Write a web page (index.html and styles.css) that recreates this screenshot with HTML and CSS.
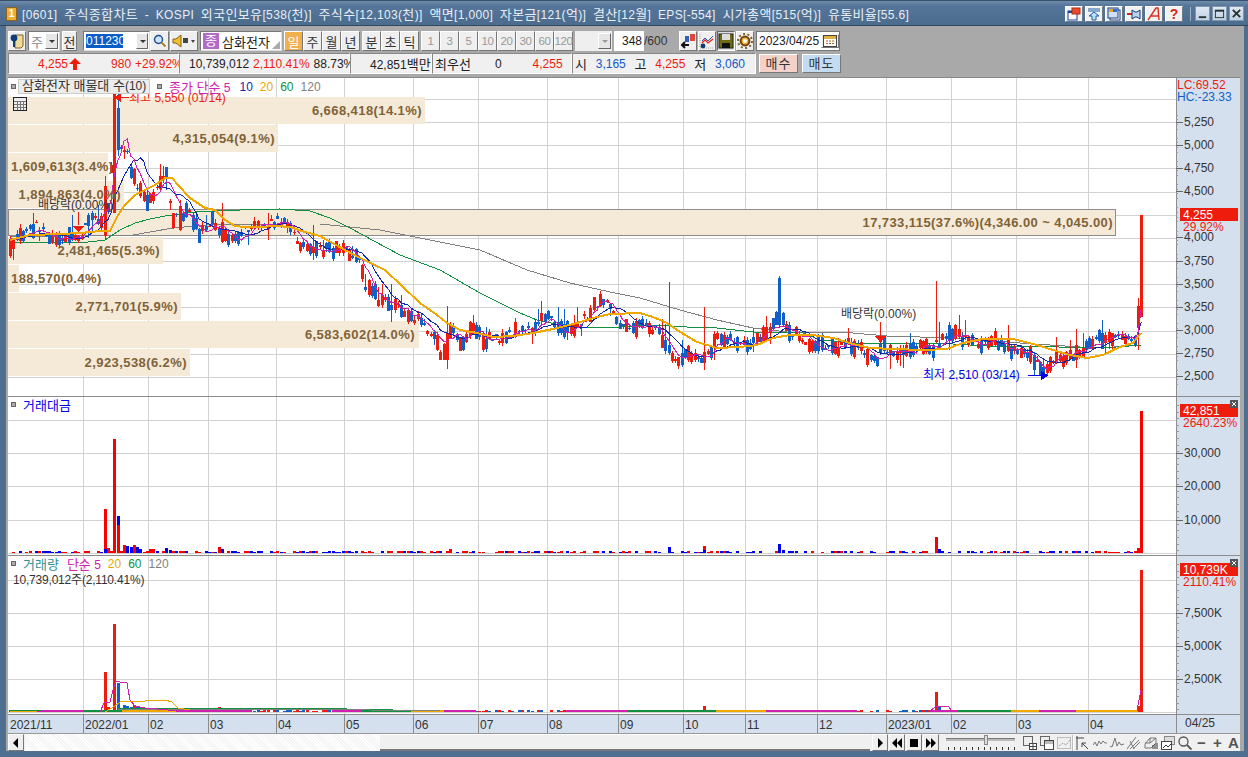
FILE: index.html
```html
<!DOCTYPE html>
<html lang="ko">
<head>
    <meta charset="UTF-8">
    <title>주식종합차트</title>
    <link rel="stylesheet" href="styles.css">
</head>
<body>
<div class="window">
    <div class="titlebar">
        <span class="app-icon">1</span>
        <span class="title-text">[0601] <b>주식종합차트</b> - KOSPI <b>외국인보유</b>[538(<b>천</b>)] <b>주식수</b>[12,103(<b>천</b>)] <b>액면</b>[1,000] <b>자본금</b>[121(<b>억</b>)] <b>결산</b>[12<b>월</b>] EPS[-554] <b>시가총액</b>[515(<b>억</b>)] <b>유통비율</b>[55.6]</span>
        <div class="title-tools">
            <span class="tool-btn"><svg width="14" height="14" viewBox="0 0 14 14"><rect x="1" y="4" width="9" height="9" fill="#fff" stroke="#1a3f9c"/><rect x="1" y="4" width="9" height="2" fill="#1a3f9c"/><rect x="5" y="1" width="8" height="6" fill="#e84c2c" stroke="#b02c10"/></svg></span>
            <span class="tool-btn"><svg width="14" height="14" viewBox="0 0 14 14"><path d="M1 2h12M1 4h12" stroke="#1a5fa8"/><path d="M7 5l5 4H9v4H5V9H2z" fill="#bfe0f4" stroke="#1a5fa8"/></svg></span>
            <span class="tool-btn"><svg width="14" height="14" viewBox="0 0 14 14"><rect x="3" y="3" width="10" height="10" fill="#fff" stroke="#1a3f7c"/><rect x="1" y="1" width="10" height="10" fill="#cfe0f4" stroke="#1a3f7c"/><rect x="2" y="2" width="4" height="3" fill="#e8a030"/><rect x="6" y="2" width="4" height="3" fill="#3070d0"/></svg></span>
            <span class="tool-btn"><svg width="14" height="14" viewBox="0 0 14 14"><path d="M0 7h5" stroke="#d02818" stroke-width="2"/><path d="M5 3l3 2h2l3-2v9l-3-2H8l-3 2z" fill="#bcd4ec" stroke="#123a7c"/></svg></span>
            <span class="tool-btn"><svg width="14" height="14" viewBox="0 0 14 14"><path d="M1 13L9 1h2l1 12M4 9h8" fill="none" stroke="#d83020" stroke-width="1.4"/></svg></span>
            <span class="tool-btn help">?</span>
        </div>
        <span class="title-sep"></span>
        <div class="win-btns">
            <span class="win-btn"><svg width="11" height="11" viewBox="0 0 12 12"><rect x="2" y="9" width="8" height="2" fill="#233"/></svg></span>
            <span class="win-btn"><svg width="11" height="11" viewBox="0 0 12 12"><rect x="1.5" y="2.5" width="9" height="8" fill="none" stroke="#233"/><rect x="1" y="2" width="10" height="2" fill="#233"/></svg></span>
            <span class="win-btn"><svg width="11" height="11" viewBox="0 0 12 12"><path d="M2 2l8 8M10 2l-8 8" stroke="#233" stroke-width="2"/></svg></span>
        </div>
    </div>

    <div class="frame">
        <div class="toolbars">
            <div class="toolbar">
                <span class="btn btn-icon w18"><svg width="16" height="16" viewBox="0 0 16 16"><path d="M6 2h8v11l-2 2H6z" fill="#f0dc98" stroke="#806020"/><circle cx="5" cy="5" r="3.4" fill="#103c78"/><path d="M5 7v7" stroke="#103c78" stroke-width="2"/></svg></span>
                <span class="combo w32"><span class="combo-val grey">주</span><span class="arrow"></span></span>
                <span class="btn w15">전</span>
                <span class="combo code"><span class="code-sel">011230</span><span class="arrow"></span></span>
                <span class="btn btn-icon w19 search"><svg width="14" height="14" viewBox="0 0 14 14"><circle cx="5.5" cy="5.5" r="4" fill="#cfe4f8" stroke="#1c4c8c" stroke-width="1.4"/><path d="M8.5 8.5l4 4" stroke="#b08020" stroke-width="2"/></svg></span>
                <span class="btn btn-icon speaker"><svg width="24" height="14" viewBox="0 0 24 14"><path d="M1 5h3l5-4v12l-5-4H1z" fill="#f0c030" stroke="#806010"/><rect x="11" y="4" width="5" height="5" fill="#444"/><path d="M19 6h4l-2 3z" fill="#444"/></svg></span>
                <span class="combo name"><span class="name-badge">종</span><span class="name-text">삼화전자</span><span class="corner"></span></span>
                <span class="seg">
                    <span class="btn on">일</span><span class="btn">주</span><span class="btn">월</span><span class="btn">년</span>
                </span>
                <span class="seg">
                    <span class="btn">분</span><span class="btn">초</span><span class="btn">틱</span>
                </span>
                <span class="seg nums">
                    <span class="btn">1</span><span class="btn">3</span><span class="btn">5</span><span class="btn">10</span><span class="btn">20</span><span class="btn">30</span><span class="btn">60</span><span class="btn">120</span>
                </span>
                <span class="combo blank"><span class="combo-val"></span><span class="arrow faded"></span></span>
                <span class="count">348</span><span class="count-max">/600</span>
                <span class="btn btn-icon w18 ml7"><svg width="16" height="16" viewBox="0 0 16 16"><rect x="10" y="1" width="5" height="7" fill="#e04838"/><rect x="5" y="3" width="4" height="6" fill="#3060b8"/><path d="M9 12H2m3-3l-3 3 3 3" fill="none" stroke="#111" stroke-width="2"/></svg></span>
                <span class="btn btn-icon w18 tight"><svg width="16" height="16" viewBox="0 0 16 16"><path d="M1 1v14h14" fill="none" stroke="#aaa" stroke-dasharray="1 1"/><path d="M3 8l3-3 3 3 5-5" fill="none" stroke="#2858a8"/><path d="M3 10l3-3 3 3 5-4" fill="none" stroke="#e02818" stroke-width="1.3"/><circle cx="4" cy="13" r="2.4" fill="#103c68"/></svg></span>
                <span class="btn btn-icon w18 tight pressed"><svg width="16" height="16" viewBox="0 0 16 16"><rect x="1" y="1" width="14" height="14" fill="#6c6c14" stroke="#222"/><rect x="4" y="1" width="8" height="6" fill="#ddd"/><rect x="4" y="10" width="8" height="5" fill="#111"/></svg></span>
                <span class="btn btn-icon w18 tight"><svg width="16" height="16" viewBox="0 0 16 16"><circle cx="8" cy="8" r="4.4" fill="#f0b030" stroke="#704010" stroke-width="2"/><circle cx="8" cy="8" r="7" fill="none" stroke="#806030" stroke-width="2" stroke-dasharray="2 2.4"/><circle cx="8" cy="8" r="2" fill="#fff"/></svg></span>
                <span class="date"><span class="date-val">2023/04/25</span><span class="btn btn-icon w18"><svg width="14" height="12" viewBox="0 0 14 12"><rect x=".5" y=".5" width="13" height="11" fill="#fff" stroke="#444"/><rect x="1" y="1" width="12" height="3" fill="#e0b040"/><path d="M3 6h8M3 8.5h8" stroke="#b06020" stroke-dasharray="2 1"/></svg></span></span>
            </div>

            <div class="toolbar quote">
                <div class="qbox q1">
                    <span class="red price">4,255</span>
                    <svg class="up" width="12" height="12" viewBox="0 0 12 12"><path d="M6 0l6 6H8v6H4V6H0z" fill="#ee1c0c"/></svg>
                    <span class="red change">980</span>
                    <span class="red rate">+29.92%</span>
                </div>
                <div class="qbox q2">
                    <span class="vol">10,739,012</span>
                    <span class="red volrate">2,110.41%</span>
                    <span>88.73%</span>
                </div>
                <div class="qbox q3"><span>42,851<b>백만</b></span></div>
                <div class="qbox q4">
                    <span class="best">최우선</span>
                    <span class="zero">0</span>
                    <span class="red bid">4,255</span>
                </div>
                <div class="qbox q5">
                    <b>시</b><span class="blue">3,165</span><b>고</b><span class="red">4,255</span><b>저</b><span class="blue">3,060</span>
                </div>
                <span class="trade buy">매수</span>
                <span class="trade sell">매도</span>
            </div>
        </div>

        <div class="chart">
            <div class="pane pane-price">
                <div class="plot">
                    <svg id="priceSvg" class="plot-svg" viewBox="8 78 1168 318" width="1168" height="318"></svg>
                    <div class="legend">
                        <i class="dot"></i><span class="legend-box"><b>삼화전자 매물대 수</b>(10)</span>
                        <i class="dot"></i><span class="c-mag"><b>종가 단순</b> 5</span><span class="c-navy ml2">10</span><span class="c-org">20</span><span class="c-grn">60</span><span class="c-gry">120</span>
                    </div>
                    <span class="table-icon"><svg width="14" height="14" viewBox="0 0 14 14"><rect x=".5" y=".5" width="13" height="13" fill="#eee" stroke="#222"/><path d="M1 4.5h12M1 7.5h12M1 10.5h12M4.5 4v9M7.5 4v9M10.5 4v9" stroke="#777"/></svg></span>
                </div>
                <div class="axis"><svg id="priceAxis" viewBox="1176 78 64 318" width="64" height="318"></svg></div>
            </div>
            <div class="pane pane-vol">
                <div class="plot">
                    <svg id="amountSvg" class="plot-svg" viewBox="8 397 1168 158" width="1168" height="158"></svg>
                    <div class="legend"><i class="dot"></i><span class="c-blue"><b>거래대금</b></span></div>
                </div>
                <div class="axis"><svg id="amountAxis" viewBox="1176 397 64 158" width="64" height="158"></svg><svg class="pane-x" width="8" height="8" viewBox="0 0 8 8"><rect width="8" height="8" fill="#555"/><path d="M2 2l4 4M6 2L2 6" stroke="#fff"/></svg></div>
            </div>
            <div class="pane pane-vol last">
                <div class="plot">
                    <svg id="volumeSvg" class="plot-svg" viewBox="8 556 1168 158" width="1168" height="158"></svg>
                    <div class="legend"><i class="dot"></i><span class="c-teal"><b>거래량</b></span><span class="c-mag"><b>단순</b> 5</span><span class="c-org">20</span><span class="c-grn">60</span><span class="c-gry">120</span></div>
                    <div class="legend-sub">10,739,012주(2,110.41%)</div>
                </div>
                <div class="axis"><svg id="volumeAxis" viewBox="1176 556 64 158" width="64" height="158"></svg><svg class="pane-x" width="8" height="8" viewBox="0 0 8 8"><rect width="8" height="8" fill="#555"/><path d="M2 2l4 4M6 2L2 6" stroke="#fff"/></svg></div>
            </div>
            <div class="timeaxis">
                <div class="timeaxis-plot"><svg id="timeSvg" viewBox="8 714 1168 18" width="1168" height="18"></svg></div>
                <div class="timeaxis-end">04/25</div>
            </div>
        </div>

        <div class="bottombar">
            <span class="btn nav-btn"><svg width="8" height="10" viewBox="0 0 8 10"><path d="M6 0v10L1 5z" fill="#000"/></svg></span>
            <span class="track"></span>
            <span class="thumb"></span>
            <span class="btn nav-btn"><svg width="8" height="10" viewBox="0 0 8 10"><path d="M2 0v10l5-5z" fill="#000"/></svg></span>
            <span class="btn nav-btn"><svg width="12" height="10" viewBox="0 0 12 10"><path d="M6 0v10L1 5zM11 0v10L6 5z" fill="#000"/></svg></span>
            <span class="btn nav-btn"><svg width="10" height="10" viewBox="0 0 10 10"><rect x="1" y="1" width="8" height="8" fill="#000"/></svg></span>
            <span class="btn nav-btn"><svg width="12" height="10" viewBox="0 0 12 10"><path d="M1 0v10l5-5zM6 0v10l5-5z" fill="#000"/></svg></span>
            <span class="slider"><span class="slider-line"></span><span class="slider-knob"></span><span class="slider-ticks"></span></span>
            <div class="tools">
                <svg width="14" height="14" viewBox="0 0 14 14"><rect x=".5" y=".5" width="9" height="9" fill="#eee" stroke="#666"/><rect x="6.5" y="7.5" width="7" height="6" fill="#fff" stroke="#444"/><path d="M10 7v7M6 10.500h8" stroke="#444"/></svg>
                <svg width="14" height="14" viewBox="0 0 14 14"><rect x=".5" y=".5" width="9" height="9" fill="#eee" stroke="#666"/><rect x="4.500" y="4.500" width="9" height="9" fill="#fff" stroke="#444"/><rect x="5" y="5" width="8" height="3" fill="#bbb"/></svg>
                <svg width="14" height="14" viewBox="0 0 14 14"><rect x=".5" y="1.500" width="13" height="11" fill="none" stroke="#888" stroke-dasharray="1 1"/><path d="M2 10l4-3 3 2 4-5" fill="none" stroke="#888" stroke-dasharray="1 1"/></svg>
                <span class="tools-gap"></span>
                <svg width="14" height="14" viewBox="0 0 14 14"><path d="M1 0v14M0 2h8M6 7l6 6M6 7h4M6 7v4" fill="none" stroke="#444"/></svg>
                <svg width="14" height="14" viewBox="0 0 14 14"><path d="M0 9l2-3 2 4 2-5 2 3 2-3 2 2h2" fill="none" stroke="#777"/></svg>
                <svg width="14" height="14" viewBox="0 0 14 14"><path d="M0 10l2 1 3-9 2 8 2-4 2 3 3-1" fill="none" stroke="#777"/></svg>
                <svg width="14" height="14" viewBox="0 0 14 14"><path d="M0 13L9 1M3 13L12 4M6 13l7-7M3 5l4 8" fill="none" stroke="#777"/></svg>
                <svg width="14" height="14" viewBox="0 0 14 14"><path d="M1 8l5-6h6v5l-5 5H1zM6 2v5H1M6 7l6-5" fill="#eee" stroke="#777"/><path d="M9 13V9M11 13V8M13 13V7" stroke="#333"/></svg>
                <svg width="14" height="14" viewBox="0 0 14 14"><rect x="3.500" y=".5" width="10" height="8" fill="#ddd" stroke="#888"/><rect x=".5" y="5.500" width="10" height="8" fill="#fff" stroke="#444"/><path d="M2 12l3-3 2 2 3-3" fill="none" stroke="#333"/></svg>
                <svg width="14" height="14" viewBox="0 0 14 14"><circle cx="5.500" cy="5.500" r="4.500" fill="none" stroke="#555" stroke-width="1.300"/><path d="M9 9l4.500 4.500" stroke="#555" stroke-width="1.800"/></svg>
                <span class="tool-char">−</span>
                <span class="tool-char">+</span>
                <span class="tool-char">A</span>
            </div>
        </div>
    </div>
</div>
<script src="chart.js"></script>
</body>
</html>
```

FILE: styles.css
```css
:root {
    --frame: #4f6f90;
    --panel: #a9a9a9;
    --axis: #d5e0ee;
    --grid: #d2d2d2;
    --line: #8c8c8c;
    --red: #ee1c0c;
    --blue: #1458c8;
}

* {
    margin: 0;
    padding: 0;
    box-sizing: border-box;
}

body {
    width: 1248px;
    height: 757px;
    overflow: hidden;
    background-color: var(--frame);
    font-family: "Liberation Sans", "Noto Sans CJK KR", sans-serif;
    font-size: 12px;
    color: #222;
}

/* hangul runs: the CJK face sets narrower than the reference at 12px */
b {
    font-weight: normal;
    font-size: 13px;
}

svg {
    display: block;
    flex: none;
}

.window {
    height: 757px;
    display: flex;
    flex-direction: column;
}

/* title bar */
.titlebar {
    height: 26px;
    flex: none;
    display: flex;
    align-items: center;
    padding: 2px 4px 1px 6px;
    background: linear-gradient(#6f8dab, #55759a 20%, #4c6c8e);
    border-top: 1px solid #34506c;
    border-bottom: 1px solid #33485e;
}

.app-icon {
    width: 11px;
    height: 14px;
    background: #eeae38;
    border: 1px solid #8c6420;
    color: #fff;
    font-weight: bold;
    font-size: 10px;
    line-height: 12px;
    text-align: center;
}

.title-text {
    margin-left: 5px;
    color: #e8eef5;
    letter-spacing: .35px;
    word-spacing: 3px;
    white-space: nowrap;
    flex: 1;
}

.title-tools {
    display: flex;
    gap: 2px;
}

.tool-btn {
    width: 18px;
    height: 16px;
    display: flex;
    align-items: center;
    justify-content: center;
    background: #f1f1f1;
    border: 1px solid;
    border-color: #fff #6a7a8a #6a7a8a #fff;
}

.help {
    color: #d82818;
    font-weight: bold;
    font-size: 14px;
}

.title-sep {
    width: 1px;
    height: 14px;
    margin: 0 4px 0 7px;
    background: #9fb2c5;
}

.win-btns {
    display: flex;
    gap: 2px;
}

.win-btn {
    width: 15px;
    height: 15px;
    display: flex;
    align-items: center;
    justify-content: center;
    background: linear-gradient(#dfe8f2, #c0d0e2);
    border: 1px solid #7f96ad;
}

/* toolbars */
.frame {
    flex: 1;
    margin: 0 4px 6px 6px;
    padding: 0 4px 0 2px;
    background-color: var(--panel);
    display: flex;
    flex-direction: column;
    min-height: 0;
}

.toolbars {
    height: 51px;
    flex: none;
    padding-top: 5px;
}

.toolbar {
    height: 20px;
    display: flex;
    align-items: stretch;
    gap: 2px;
}

.btn {
    display: flex;
    align-items: center;
    justify-content: center;
    background-color: #efefef;
    border: 1px solid;
    border-color: #fdfdfd #777 #777 #fdfdfd;
    color: #333;
    font-size: 13px;
    flex: none;
}

.w15 { width: 15px; }
.w18 { width: 18px; }
.w19 { width: 19px; }
.ml7 { margin-left: 7px; }
.ml2 { margin-left: 2px; }
.tight { margin-left: -1px; }

.pressed {
    background-color: #ddd;
    border-color: #666 #fff #fff #666;
}

.combo {
    display: flex;
    align-items: center;
    background-color: #fff;
    border: 1px solid;
    border-color: #777 #ddd #ddd #777;
    flex: none;
}

.w32 { width: 32px; }

.combo-val {
    flex: 1;
    text-align: center;
    font-size: 13px;
}

.grey { color: #888; }

.arrow {
    position: relative;
    width: 13px;
    height: 16px;
    margin-right: 1px;
    background: #e6e6e6;
    border: 1px solid;
    border-color: #fff #666 #666 #fff;
}

.arrow::after {
    content: "";
    position: absolute;
    left: 3px;
    top: 6px;
    border: 3px solid transparent;
    border-top: 3px solid #333;
}

.arrow.faded::after { border-top-color: #999; }

.code {
    width: 67px;
    margin-left: 4px;
    padding-left: 2px;
}

.code-sel {
    width: 37px;
    background-color: #0a5cc8;
    color: #fff;
    line-height: 14px;
    margin-right: 13px;
}

.search {
    margin-left: -2px;
}

.speaker {
    width: 28px;
    margin-left: -1px;
}

.name {
    width: 82px;
    padding-left: 2px;
    position: relative;
}

.name-badge {
    width: 16px;
    height: 16px;
    background-color: #b26cc8;
    color: #fff;
    text-align: center;
    font-size: 13px;
    line-height: 15px;
}

.name-text {
    margin-left: 3px;
    font-size: 13px;
    color: #222;
}

.corner {
    position: absolute;
    right: 1px;
    bottom: 1px;
    border: 4px solid transparent;
    border-right-color: #aaa;
    border-bottom-color: #aaa;
}

.seg {
    display: flex;
    gap: 0;
}

.seg .btn {
    width: 19px;
}

.seg .on {
    background-color: #f2b04c;
    color: #fff;
}

.nums .btn {
    color: #999;
    font-size: 11.5px;
    letter-spacing: -.4px;
}

.blank {
    width: 37px;
    background-color: #efefef;
    border: none;
}

.count {
    width: 30px;
    background-color: #fff;
    text-align: right;
    line-height: 20px;
    padding-right: 2px;
    color: #222;
}

.count-max {
    width: 26px;
    line-height: 20px;
    margin-left: -2px;
    color: #333;
}

.date {
    display: flex;
    align-items: center;
    width: 84px;
    background-color: #fff;
    border: 1px solid #777;
}

.date-val {
    flex: 1;
    padding-left: 2px;
    white-space: nowrap;
}

.quote {
    margin-top: 2px;
    gap: 0;
    height: 21px;
}

.qbox {
    display: flex;
    align-items: center;
    flex: none;
    background-color: #f0f0f0;
    border: 1px solid;
    border-color: #888 #fff #fff #888;
    height: 21px;
    white-space: nowrap;
}

.red { color: var(--red); }
.blue { color: var(--blue); }

.q1 { width: 171px; }
.price { margin-left: 29px; }
.up { margin-left: 1px; }
.change { margin-left: 30px; }
.rate { margin-left: 4px; }

.q2 { width: 171px; padding-left: 9px; }
.volrate { margin: 0 4px; }

.q3 { width: 82px; padding-left: 19px; }

.q4 { width: 140px; font-size: 12px; }
.best { margin-left: 2px; font-size: 13px; }
.zero { margin-left: 24px; }
.bid { margin-left: 31px; }

.q5 {
    width: 184px;
    padding: 0 10px 0 2px;
    justify-content: space-between;
}

.trade {
    width: 39px;
    height: 19px;
    margin-top: 1px;
    text-align: center;
    font-size: 13px;
    line-height: 17px;
    letter-spacing: 1px;
    color: #333;
    border: 1px solid;
    border-color: #fff #777 #777 #fff;
    flex: none;
}

.buy { margin-left: 3px; background-color: #f4d2ca; }
.sell { margin-left: 4px; background-color: #c4dcf2; }

/* chart panes */
.chart {
    flex: none;
    display: flex;
    flex-direction: column;
    background-color: #fff;
    border-top: 1px solid #888;
}

.pane {
    display: flex;
    border-bottom: 1px solid var(--line);
}

.pane-price { height: 319px; }
.pane-vol { height: 159px; }

.plot {
    position: relative;
    width: 1168px;
    flex: none;
    background-color: #fff;
}

.plot-svg { shape-rendering: crispEdges; }

.plot-svg text,
.axis text {
    font-family: "Liberation Sans", "Noto Sans CJK KR", sans-serif;
    font-size: 12px;
}

.plot-svg .profile-label {
    font-size: 13px;
    font-weight: bold;
    letter-spacing: .42px;
    fill: #7f6337;
}

.axis {
    position: relative;
    width: 64px;
    flex: none;
    background-color: var(--axis);
    border-left: 1px solid var(--line);
}

.axis svg {
    margin-left: -1px;
}

.axis .pane-x {
    position: absolute;
    right: 2px;
    top: 3px;
    margin: 0;
}

.legend {
    position: absolute;
    left: 3px;
    top: 1px;
    display: flex;
    align-items: center;
    gap: 7px;
    height: 15px;
    white-space: nowrap;
}

.pane-vol .legend {
    top: 0;
}

.pane-vol .legend .c-mag { margin-left: 1px; }

.dot {
    width: 5px;
    height: 5px;
    background-color: #aaa;
    border: 1px solid #666;
    flex: none;
}

.legend-box {
    height: 15px;
    width: 132px;
    margin-left: -5px;
    padding-left: 3px;
    line-height: 12px;
    color: #333;
    background-color: #ececec;
    border: 1px solid #ccc;
}

.c-mag { color: #d020b0; }
.c-navy { color: #1028a8; }
.c-org { color: #e8a800; }
.c-grn { color: #109040; }
.c-gry { color: #808080; }
.c-blue { color: #0000e8; }
.c-teal { color: #309090; }

.legend-sub {
    position: absolute;
    left: 5px;
    top: 14px;
    color: #333;
    letter-spacing: -.2px;
}

.table-icon {
    position: absolute;
    left: 5px;
    top: 19px;
}

.timeaxis {
    display: flex;
    height: 19px;
    background-color: var(--axis);
    border-bottom: 1px solid #999;
}

.timeaxis-plot {
    width: 1168px;
    flex: none;
}

.timeaxis-plot svg {
    shape-rendering: crispEdges;
}

.timeaxis-plot text {
    font-family: "Liberation Sans", sans-serif;
    font-size: 12px;
}

.timeaxis-end {
    flex: 1;
    border-left: 1px solid var(--line);
    padding-left: 8px;
    line-height: 17px;
    color: #333;
}

/* bottom bar */
.bottombar {
    height: 18px;
    display: flex;
    align-items: stretch;
    background-color: #f0f0f0;
}

.nav-btn {
    width: 16px;
    margin-right: 1px;
    flex: none;
}

.track {
    width: 355px;
    flex: none;
    background-image: repeating-linear-gradient(45deg, #fff 0 1px, #f4f4f4 1px 2px);
}

.thumb {
    width: 490px;
    flex: none;
    margin-right: 2px;
    background-color: #f0f0f0;
    border-top: 1px solid #fff;
    border-bottom: 2px solid #777;
}

.slider {
    position: relative;
    width: 69px;
    flex: none;
    margin: 0 8px 0 6px;
}

.slider-line {
    position: absolute;
    left: 0;
    right: 0;
    top: 4px;
    height: 3px;
    background-color: #bbb;
    border-top: 1px solid #777;
}

.slider-knob {
    position: absolute;
    left: 38px;
    top: 1px;
    width: 4px;
    height: 10px;
    background-color: #ddd;
    border: 1px solid #888;
}

.slider-ticks {
    position: absolute;
    left: 2px;
    right: 0;
    bottom: 1px;
    height: 3px;
    background-image: repeating-linear-gradient(90deg, #333 0 1px, transparent 1px 6px);
}

.tools {
    display: flex;
    align-items: center;
    gap: 3px;
    flex: 1;
    min-width: 0;
}

.tools-gap {
    width: 1px;
    height: 16px;
    margin: 0 -1px;
    background-color: #fff;
    box-shadow: -1px 0 #bbb;
}

.tool-char {
    width: 14px;
    text-align: center;
    font-size: 15px;
    font-weight: bold;
    color: #555;
    line-height: 14px;
}
```

FILE: chart.js
```js
const NS = "http://www.w3.org/2000/svg";

const RED = "#ee1c0c";
const BLUE = "#1060c8";

const gridX = [83, 148, 208, 276, 344, 413, 478, 547, 618, 683, 745, 817, 886, 951, 1016, 1088];

function el(parent, name, attrs, text) {
    const node = document.createElementNS(NS, name);
    for (const key in attrs) node.setAttribute(key, attrs[key]);
    if (text !== undefined) node.textContent = text;
    parent.appendChild(node);
    return node;
}

function rect(svg, x, y, w, h, fill) {
    el(svg, "rect", { x, y, width: w, height: h, fill });
}

function line(svg, x1, y1, x2, y2, stroke) {
    el(svg, "line", { x1, y1, x2, y2, stroke, "stroke-width": 1 });
}

function poly(svg, pts, stroke, width) {
    el(svg, "polyline", {
        points: pts.map(p => p.join(",")).join(" "),
        fill: "none",
        stroke,
        "stroke-width": width || 1
    });
}

function label(svg, x, y, str, fill, extra) {
    el(svg, "text", Object.assign({ x, y, fill, "shape-rendering": "auto" }, extra || {}), str);
}

// small seeded generator so the picture comes out the same on every run
let seed = 421;
function rnd() {
    seed = (seed + 0x6d2b79f5) | 0;
    let t = Math.imul(seed ^ (seed >>> 15), 1 | seed);
    t = (t + Math.imul(t ^ (t >>> 7), 61 | t)) ^ t;
    return ((t ^ (t >>> 14)) >>> 0) / 4294967296;
}

function interp(path, x) {
    for (let i = 1; i < path.length; i++) {
        if (x <= path[i][0]) {
            const a = path[i - 1], b = path[i];
            return a[1] + (b[1] - a[1]) * (x - a[0]) / (b[0] - a[0]);
        }
    }
    return path[path.length - 1][1];
}

const barX = i => 10 + i * 3.26;
const barCount = 348;

/* body centre of the candles, page pixels */
const closePath = [
    [10, 248], [16, 236], [25, 232], [35, 226], [42, 228], [50, 236], [58, 240], [65, 240], [72, 236], [80, 237],
    [85, 225], [92, 215], [100, 222], [106, 225], [113, 150], [116, 130], [119, 140], [123, 148], [127, 146],
    [129, 170], [134, 174], [137, 186], [143, 200], [149, 206], [153, 194], [158, 184], [165, 172], [173, 220],
    [178, 218], [186, 212], [192, 217], [199, 233], [202, 230], [208, 225], [212, 214], [217, 226], [222, 232],
    [230, 237], [237, 241], [240, 233], [258, 226], [275, 222], [285, 222], [297, 240], [310, 252], [318, 250],
    [330, 250], [345, 250], [358, 258], [365, 285], [372, 292], [380, 300], [395, 305], [410, 316], [420, 318],
    [433, 337], [440, 352], [447, 346], [452, 326], [458, 340], [463, 340], [472, 327], [483, 340], [493, 340],
    [510, 335], [532, 326], [545, 317], [560, 328], [575, 326], [587, 316], [595, 304], [603, 300], [610, 310],
    [622, 326], [635, 326], [648, 328], [659, 332], [668, 349], [673, 356], [679, 360], [684, 355], [697, 356],
    [705, 357], [717, 338], [735, 341], [753, 344], [769, 328], [776, 318], [785, 325], [789, 331], [810, 345],
    [837, 348], [850, 345], [867, 354], [877, 359], [883, 347], [895, 355], [906, 347], [927, 345], [930, 356],
    [945, 337], [958, 336], [975, 342], [1000, 342], [1013, 350], [1030, 354], [1040, 366], [1043, 370],
    [1050, 364], [1060, 358], [1081, 354], [1087, 345], [1099, 338], [1112, 336], [1130, 336], [1135, 341]
];

/* bars read off the reference: x, body top, body bottom, wick top, wick bottom, colour */
const keyBars = [
    [10, 239, 256, 236, 258, RED],
    [113, 94, 213, 94, 213, RED],
    [116, 108, 150, 94, 156, BLUE],
    [103, 186, 236, 176, 240, RED],
    [165, 167, 177, 167, 190, BLUE],
    [178, 206, 230, 200, 231, RED],
    [222, 222, 242, 203, 243, RED],
    [312, 247, 253, 225, 260, RED],
    [447, 333, 360, 306, 369, RED],
    [393, 305, 310, 284, 322, BLUE],
    [668, 345, 353, 282, 355, BLUE],
    [705, 352, 363, 307, 370, RED],
    [779, 278, 325, 276, 328, BLUE],
    [935, 340, 342, 281, 343, RED],
    [940, 343, 347, 322, 350, BLUE],
    [1043, 367, 375, 360, 379, BLUE],
    [1082, 348, 357, 333, 358, RED],
    [1138, 306, 328, 298, 350, RED],
    [1141, 215, 317, 215, 317, RED]
];

const bars = [];
for (let i = 0; i < barCount; i++) {
    const x = barX(i);
    const c = interp(closePath, x);
    const size = rnd() < 0.25 ? 1 + rnd() * 2 : 4 + rnd() * 12;
    const up = rnd() > 0.5;
    const wickUp = rnd() < 0.1 ? 8 + rnd() * 10 : rnd() * 4;
    const wickDown = rnd() < 0.08 ? 6 + rnd() * 8 : rnd() * 3;
    const top = c - size / 2 + (rnd() - 0.5) * 9;
    bars.push({
        x,
        top,
        bot: top + size,
        high: top - wickUp,
        low: top + size + wickDown,
        color: up ? RED : BLUE,
        close: up ? top : top + size
    });
}
keyBars.forEach(k => {
    const i = Math.max(0, Math.min(barCount - 1, Math.round((k[0] - 10) / 3.26)));
    bars[i] = {
        x: barX(i), top: k[1], bot: k[2], high: k[3], low: k[4], color: k[5],
        close: k[5] === RED ? k[1] : k[2]
    };
});

function average(n) {
    const out = [];
    for (let i = 0; i < barCount; i++) {
        let sum = 0;
        for (let j = i - n + 1; j <= i; j++) sum += j < 0 ? 238 : bars[j].close;
        out.push([bars[i].x, Math.round(sum / n)]);
    }
    return out;
}

const ma20 = [
    [10, 240], [30, 235], [60, 234], [80, 233], [100, 231], [110, 231], [118, 215], [125, 205], [135, 195], [145, 190],
    [155, 185], [165, 178], [172, 178], [178, 185], [190, 198], [205, 208], [215, 210], [225, 220], [235, 226],
    [245, 227], [260, 227], [275, 226], [290, 227], [305, 232], [320, 236], [345, 250], [360, 258], [385, 270],
    [403, 287], [420, 303], [437, 315], [447, 323], [460, 330], [477, 333], [493, 337], [513, 336], [533, 333],
    [553, 329], [577, 323], [597, 317], [610, 314], [640, 313], [653, 317], [667, 323], [680, 332], [697, 342],
    [717, 348], [740, 347], [757, 345], [773, 338], [790, 335], [813, 335], [833, 338], [853, 344], [870, 348],
    [893, 349], [923, 350], [947, 349], [963, 343], [983, 339], [1013, 339], [1037, 345], [1053, 350], [1070, 355],
    [1087, 358], [1103, 355], [1120, 347], [1133, 343], [1141, 333]
];

const ma60 = [
    [10, 242], [60, 242], [80, 243], [105, 240], [120, 230], [135, 223], [150, 219], [165, 216], [195, 212], [240, 210],
    [280, 209], [310, 211], [330, 218], [350, 228], [400, 255], [440, 270], [480, 293], [500, 303], [520, 313],
    [537, 320], [560, 325], [580, 328], [620, 327], [653, 325], [687, 327], [717, 328], [753, 332], [803, 333],
    [820, 340], [853, 343], [887, 343], [953, 344], [987, 346], [1037, 346], [1080, 348], [1117, 347], [1141, 345]
];

const ma120 = [
    [10, 236], [60, 236], [100, 235], [133, 235], [173, 228], [207, 225], [267, 224], [320, 224], [380, 230], [430, 240],
    [480, 250], [527, 270], [570, 283], [610, 292], [640, 298], [680, 310], [717, 320], [753, 328], [787, 332],
    [853, 333], [887, 336], [953, 338], [1020, 343], [1080, 347], [1100, 348], [1141, 345]
];

const profile = [
    [97, 425, "6,668,418(14.1%)", 422],
    [125, 278, "4,315,054(9.1%)", 275],
    [153, 108, "1,609,613(3.4%)", 110],
    [181, 124, "1,894,863(4.0%)", 121],
    [209, 1116, "17,733,115(37.6%)(4,346.00 ~ 4,045.00)", 1113],
    [237, 163, "2,481,465(5.3%)", 160],
    [265, 19, "188,570(0.4%)", 99],
    [293, 181, "2,771,701(5.9%)", 178],
    [321, 419, "6,583,602(14.0%)", 415],
    [349, 190, "2,923,538(6.2%)", 187]
];

function drawGrid(svg, top, bottom, lines) {
    gridX.forEach(x => line(svg, x + 0.5, top, x + 0.5, bottom, "#d2d2d2"));
    lines.forEach(y => line(svg, 8, y + 0.5, 1176, y + 0.5, "#d2d2d2"));
}

function drawPrice() {
    const svg = document.getElementById("priceSvg");
    const levels = [];
    for (let k = 0; k < 13; k++) levels.push(Math.round(98.8 + 23.18 * k));
    drawGrid(svg, 78, 396, levels);

    profile.forEach(p => {
        rect(svg, 8, p[0], p[1] - 8, 27, "#f5e9d8");
    });
    el(svg, "rect", { x: 8.5, y: 209.5, width: 1107, height: 26, fill: "#f5e9d8", stroke: "#8c8c8c" });

    poly(svg, ma120, "#808080", 1);
    poly(svg, ma60, "#109040", 1);

    bars.forEach(b => {
        const x = Math.round(b.x);
        rect(svg, x, b.high, 1, b.low - b.high, b.color);
        rect(svg, x - 1, b.top, 3, b.bot - b.top, b.color);
    });

    poly(svg, average(10), "#1028a8", 1);
    poly(svg, average(5), "#d020b0", 1);
    poly(svg, ma20, "#f0a800", 2);

    profile.forEach(p => {
        const overflow = p[1] < 20 || p[1] === 108;
        if (overflow) label(svg, 11, p[0] + 18, p[2], "#7f6337", { class: "profile-label" });
        else label(svg, p[3], p[0] + 18, p[2], "#7f6337", { class: "profile-label", "text-anchor": "end" });
    });

    // 최고 / 최저 / 배당락 markers
    rect(svg, 119, 97, 10, 1, RED);
    el(svg, "path", { d: "M115 97.500l6-5v10z", fill: RED });
    label(svg, 129, 102, "최고 5,550 (01/14)", RED);

    label(svg, 38, 209, "배당락(0.00%)", "#333");
    rect(svg, 78, 212, 1, 13, RED);
    el(svg, "path", { d: "M73 226h11l-5.500 6z", fill: RED });

    label(svg, 841, 318, "배당락(0.00%)", "#333");
    rect(svg, 880, 322, 1, 15, RED);
    el(svg, "path", { d: "M875 336h11l-5.500 7z", fill: RED });

    label(svg, 923, 379, "최저 2,510 (03/14)", "#0000e8");
    rect(svg, 1028, 375, 14, 1, "#0000e8");
    el(svg, "path", { d: "M1048 375.500l-7-5v10z", fill: "#0000e8" });
}

function axisLabels(svg, values) {
    values.forEach(v => {
        rect(svg, 1176, v[1], 7, 1, "#666");
        label(svg, 1184, v[1] + 4, v[0], "#333");
    });
}

function drawPriceAxis() {
    const svg = document.getElementById("priceAxis");
    label(svg, 1177, 89, "LC:69.52", RED);
    label(svg, 1177, 101, "HC:-23.33", BLUE);
    const names = ["5,250", "5,000", "4,750", "4,500", "4,250", "4,000", "3,750", "3,500", "3,250", "3,000", "2,750", "2,500"];
    for (let k = 0; k < 60; k++) rect(svg, 1176, Math.round(110 + k * 4.636), k % 5 === 0 ? 0 : 2, 1, "#999");
    const values = [];
    names.forEach((name, k) => {
        if (name !== "4,250") values.push([name, Math.round(121.5 + 23.18 * k)]);
    });
    axisLabels(svg, values);
    rect(svg, 1180, 208, 58, 13, RED);
    label(svg, 1183, 219, "4,255", "#fff");
    label(svg, 1183, 231, "29.92%", RED);
}

function drawVolumeAxis(id, tag, rate, top, values) {
    const svg = document.getElementById(id);
    for (let y = top + 8; y < top + 156; y += 6.6) rect(svg, 1176, Math.round(y), 3, 1, "#999");
    axisLabels(svg, values);
    rect(svg, 1180, top + 7, 58, 13, RED);
    label(svg, 1183, top + 18, tag, "#fff");
    label(svg, 1183, top + 30, rate, RED);
}

/* spikes: x, top y */
const amountSpikes = [
    [103, 509, "#f80000"], [106, 549, "#0000f0"], [109, 548, "#f80000"], [113, 439, "#f80000"], [116, 516, "#0000f0"],
    [119, 525, "#f80000"], [123, 545, "#f80000"], [126, 546, "#0000f0"], [129, 547, "#0000f0"], [133, 545, "#f80000"],
    [136, 547, "#0000f0"], [139, 549, "#0000f0"], [149, 549, "#f80000"], [153, 549, "#f80000"], [166, 548, "#0000f0"],
    [171, 550, "#0000f0"], [219, 547, "#f80000"], [222, 549, "#0000f0"], [449, 549, "#f80000"], [668, 547, "#0000f0"],
    [703, 546, "#f80000"], [706, 550, "#0000f0"], [779, 544, "#0000f0"], [782, 550, "#0000f0"], [935, 537, "#f80000"],
    [938, 549, "#0000f0"], [1138, 548, "#f80000"], [1141, 411, "#f80000"]
];

const volumeSpikes = [
    [103, 672, RED], [106, 708, RED], [109, 707, RED], [113, 624, RED], [116, 683, BLUE], [119, 690, BLUE],
    [123, 705, BLUE], [126, 706, BLUE], [129, 707, BLUE], [133, 705, RED], [136, 707, BLUE], [139, 707, BLUE],
    [219, 707, RED], [703, 706, RED], [935, 692, RED], [938, 707, BLUE], [1138, 706, RED], [1141, 570, RED]
];

function drawBars(svg, base, maxSmall, spikes, up, down) {
    bars.forEach(b => {
        if (rnd() < 0.3) return;
        const h = Math.round(1 + rnd() * maxSmall);
        rect(svg, Math.round(b.x) - 1, base - h, 3, h, rnd() > 0.5 ? up : down);
    });
    spikes.forEach(s => {
        const i = Math.round((s[0] - 10) / 3.26);
        const x = Math.round(barX(i)) - 1;
        rect(svg, x, s[1], 3, base - s[1], s[2]);
    });
}

function drawAmount() {
    const svg = document.getElementById("amountSvg");
    drawGrid(svg, 397, 555, [420, 453, 486, 520]);
    line(svg, 8, 553.5, 1176, 553.5, "#d2d2d2");
    drawBars(svg, 553, 1.4, amountSpikes, "#f80000", "#0000f0");
}

function drawVolume() {
    const svg = document.getElementById("volumeSvg");
    drawGrid(svg, 556, 714, [580, 613, 646, 679]);
    line(svg, 8, 712.5, 1176, 712.5, "#d2d2d2");
    drawBars(svg, 712, 1, volumeSpikes, RED, BLUE);

    // slow averages hug the baseline in short coloured runs
    const tones = ["#f0a800", "#d020b0", "#109040", "#f0a800", "#d020b0"];
    let x = 10;
    let k = 0;
    while (x < 1138) {
        const run = 25 + rnd() * 70;
        if (rnd() > 0.2) poly(svg, [[x, 711], [Math.min(x + run, 1138), 711]], tones[k % tones.length], 2);
        x += run;
        k++;
    }
    poly(svg, [[10, 710], [42, 710]], "#109040", 1);
    poly(svg, [[118, 708], [300, 708], [440, 711]], "#109040", 1);
    poly(svg, [[118, 710], [300, 709], [440, 711]], "#808080", 1);
    poly(svg, [
        [100, 712], [104, 703], [110, 702], [113, 690], [116, 681], [120, 682], [127, 683], [130, 700],
        [135, 706], [145, 708], [180, 711]
    ], "#d020b0", 1);
    poly(svg, [[930, 711], [935, 707], [948, 706], [952, 711]], "#d020b0", 1);
    poly(svg, [[1137, 711], [1139, 700], [1141, 690]], "#d020b0", 1);
    poly(svg, [
        [105, 712], [115, 706], [120, 702], [145, 701], [165, 700], [172, 702], [178, 708], [190, 710]
    ], "#f0a800", 1);
}

function drawTime() {
    const svg = document.getElementById("timeSvg");
    const names = ["2022/01", "02", "03", "04", "05", "06", "07", "08", "09", "10", "11", "12", "2023/01", "02", "03", "04"];
    label(svg, 10, 728, "2021/11", "#333");
    gridX.forEach((x, i) => {
        rect(svg, x, 714, 1, 18, "#8c8c8c");
        label(svg, x + 2, 728, names[i], "#333");
    });
}

drawPrice();
drawPriceAxis();
drawAmount();
drawVolume();
drawVolumeAxis("amountAxis", "42,851", "2640.23%", 397, [["30,000", 453], ["20,000", 486], ["10,000", 520]]);
drawVolumeAxis("volumeAxis", "10,739K", "2110.41%", 556, [["7,500K", 613], ["5,000K", 646], ["2,500K", 679]]);
drawTime();
```
